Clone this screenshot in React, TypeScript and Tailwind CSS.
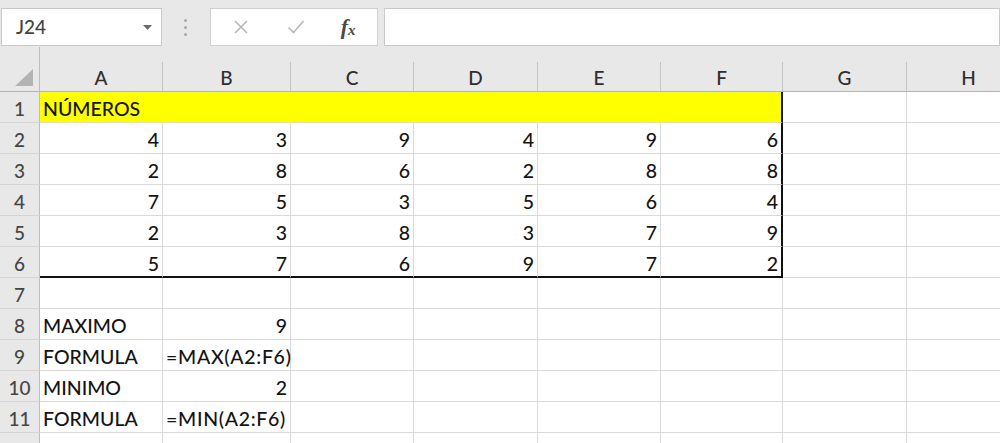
import React from "react";

const COLS = ["A", "B", "C", "D", "E", "F", "G", "H"];

type Cell = { v: string; align?: "l" | "r"; f?: boolean };

const rows: Cell[][] = [
  [{ v: "NÚMEROS" }],
  [4, 3, 9, 4, 9, 6].map((n) => ({ v: String(n), align: "r" as const })),
  [2, 8, 6, 2, 8, 8].map((n) => ({ v: String(n), align: "r" as const })),
  [7, 5, 3, 5, 6, 4].map((n) => ({ v: String(n), align: "r" as const })),
  [2, 3, 8, 3, 7, 9].map((n) => ({ v: String(n), align: "r" as const })),
  [5, 7, 6, 9, 7, 2].map((n) => ({ v: String(n), align: "r" as const })),
  [],
  [{ v: "MAXIMO" }, { v: "9", align: "r" }],
  [{ v: "FORMULA" }, { v: "=MAX(A2:F6)", f: true }],
  [{ v: "MINIMO" }, { v: "2", align: "r" }],
  [{ v: "FORMULA" }, { v: "=MIN(A2:F6)", f: true }],
  [],
];

const GRID =
  "grid grid-cols-[40px_123px_128px_123px_124px_123px_122px_124px_124px] w-[1011px]";

function DataCell({ r, c, cell }: { r: number; c: number; cell?: Cell }) {
  const inRange = r >= 1 && r <= 6 && c <= 5;
  const yellow = r === 1 && c <= 5;
  const rightThick = inRange && c === 5;
  const bottomThick = inRange && r === 6;
  const cls = [
    "h-[31px] flex items-end whitespace-nowrap text-[#141414] font-medium text-[19.5px] leading-[26px]",
    yellow ? "bg-[#ffff00]" : "bg-white",
    rightThick
      ? "border-r-2 border-r-[#111111]"
      : yellow
      ? "border-r border-r-[#ffff00]"
      : "border-r border-r-[#d9d9d9]",
    bottomThick ? "border-b-2 border-b-[#111111]" : "border-b border-b-[#d9d9d9]",
    cell?.align === "r" ? "justify-end pr-[3px]" : "justify-start pl-[3px]",
  ].join(" ");
  return (
    <div className={cls}>
      <span
        className={[
          bottomThick ? "mb-[-1px]" : "",
          cell?.f ? "tracking-[0.7px]" : "",
        ].join(" ")}
      >
        {cell?.v ?? ""}
      </span>
    </div>
  );
}

export default function App() {
  return (
    <div className="w-[1000px] h-[443px] overflow-hidden bg-[#e8e8e8] [font-family:Lato,'Open_Sans',sans-serif]">
      {/* Toolbar */}
      <div className="h-[47px] pt-[8px] flex items-start">
        <div className="ml-[1px] w-[162px] h-[38px] bg-white border border-[#c9c9c9] flex items-center justify-between pl-[14px] pr-[9px]">
          <span className="text-[19px] font-medium text-[#444444]">J24</span>
          <svg width="9" height="5" viewBox="0 0 9 5">
            <path d="M0 0 H9 L4.5 5 Z" fill="#6b6b6b" />
          </svg>
        </div>
        <div className="w-[48px] h-[38px] flex flex-col items-center justify-center gap-[4px]">
          <div className="w-[3px] h-[3px] rounded-full bg-[#a9a9a9]" />
          <div className="w-[3px] h-[3px] rounded-full bg-[#a9a9a9]" />
          <div className="w-[3px] h-[3px] rounded-full bg-[#a9a9a9]" />
        </div>
        <div className="w-[168px] h-[38px] bg-white border border-[#d0d0d0] flex items-center">
          <div className="w-[62px] flex justify-center">
            <svg width="16" height="16" viewBox="0 0 16 16">
              <path d="M2 2 L14 14 M14 2 L2 14" stroke="#b9b9b9" strokeWidth="1.7" fill="none" />
            </svg>
          </div>
          <div className="w-[48px] flex justify-center">
            <svg width="18" height="16" viewBox="0 0 18 16">
              <path d="M1.5 8.5 L6.5 13.5 L16.5 2" stroke="#b9b9b9" strokeWidth="1.7" fill="none" />
            </svg>
          </div>
          <div className="w-[58px] flex justify-center items-center text-[#4a4a4a] [font-family:'Liberation_Serif',serif] italic font-bold">
            <span className="text-[22px] leading-none">f</span>
            <span className="text-[15px] leading-none mt-[6px]">x</span>
          </div>
        </div>
        <div className="ml-[6px] w-[620px] h-[38px] bg-white border border-[#c9c9c9]" />
      </div>

      {/* Column headers */}
      <div className={`${GRID} h-[45px] border-b border-b-[#b4b4b4]`}>
        <div className="h-full border-r border-r-[#bdbdbd] flex items-end justify-end pr-[6px] pb-[5px]">
          <svg width="18" height="17" viewBox="0 0 18 17">
            <path d="M18 0 L18 17 L0 17 Z" fill="#b3b3b3" />
          </svg>
        </div>
        {COLS.map((c) => (
          <div key={c} className="h-full flex flex-col justify-end">
            <div className="h-[29px] border-r border-r-[#c6c6c6] flex items-end justify-center text-[19px] font-medium leading-[26px] text-[#2e2e2e]">
              {c}
            </div>
          </div>
        ))}
      </div>

      {/* Rows */}
      {rows.map((cells, i) => {
        const r = i + 1;
        return (
          <div key={r} className={GRID}>
            <div className="h-[31px] border-r border-r-[#bdbdbd] border-b border-b-[#d4d4d4] flex items-end justify-center text-[19px] font-medium leading-[26px] text-[#454545]">
              {r}
            </div>
            {COLS.map((_, c) => (
              <DataCell key={c} r={r} c={c} cell={cells[c]} />
            ))}
          </div>
        );
      })}
    </div>
  );
}
